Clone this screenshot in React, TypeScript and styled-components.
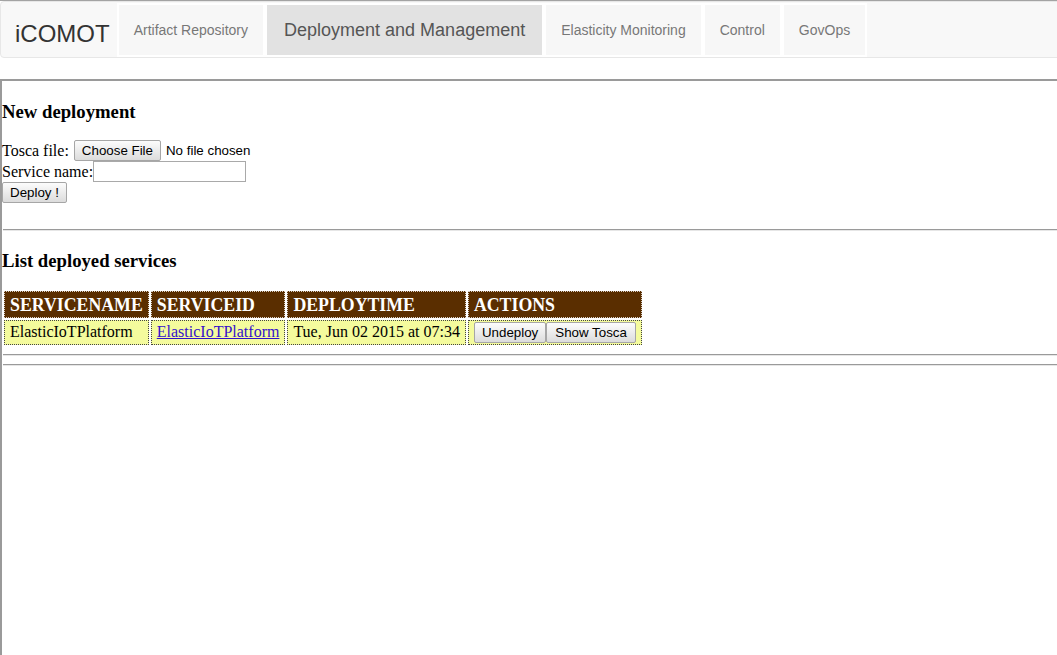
import styled, { createGlobalStyle } from 'styled-components'

const GlobalStyle = createGlobalStyle`
  html, body {
    margin: 0;
    padding: 0;
    background: #fff;
    overflow: hidden;
  }
  body {
    font-family: 'Liberation Serif', 'Times New Roman', serif;
    font-size: 16px;
    color: #000;
  }
`

const Page = styled.div`
  border-top: 1px solid #a3a3a3;
  height: 654px;
`

const Navbar = styled.nav`
  display: flex;
  align-items: flex-start;
  height: 55px;
  margin: 0 -6px 21px 0;
  border: 1px solid #e7e7e7;
  border-radius: 4px;
  background: #f8f8f8;
  font-family: 'Liberation Sans', Arial, sans-serif;
`

const Brand = styled.a`
  display: block;
  padding: 20px 7px 0 14px;
  font-size: 24px;
  line-height: 24px;
  color: #333;
  text-decoration: none;
`

const NavList = styled.ul`
  display: flex;
  margin: 1px 0 0;
  padding: 0;
  list-style: none;
`

const NavLink = styled.a<{ $active?: boolean }>`
  display: block;
  padding: ${(p) => (p.$active ? '15px 17px 15px' : '15px 15px 15px')};
  border: 2px solid #fff;
  line-height: 20px;
  font-size: ${(p) => (p.$active ? '18px' : '14px')};
  color: ${(p) => (p.$active ? '#555' : '#777')};
  background: ${(p) => (p.$active ? '#e2e2e2' : '#f7f7f7')};
  text-decoration: none;
  white-space: nowrap;
`

const Panel = styled.div`
  height: 600px;
  padding-top: 1px;
  border-top: 2px solid #9a9a9a;
  border-left: 2px solid #9a9a9a;
`

const SectionTitle = styled.h3<{ $after?: number }>`
  margin: 18.72px 0 ${(p) => p.$after ?? 18.72}px;
  font-size: 18.72px;
  font-weight: bold;
  line-height: 21px;
`

const FormRow = styled.div`
  display: flex;
  align-items: center;
  height: 21px;
  white-space: nowrap;
`

const Label = styled.label<{ $gap?: boolean }>`
  margin-right: ${(p) => (p.$gap ? '4px' : '0')};
`

const controlFace = `
  box-sizing: border-box;
  height: 21px;
  padding: 0 7px;
  border: 1px solid #a6a6a6;
  border-radius: 2px;
  background: linear-gradient(#fcfcfc, #dcdcdc);
  font-family: 'Liberation Sans', Arial, sans-serif;
  font-size: 13.33px;
  color: #000;
`

const Button = styled.button<{ $wide?: boolean }>`
  ${controlFace}
  margin: 0;
  padding: ${(p) => (p.$wide ? '0 8px' : '0 7px')};
  vertical-align: middle;
`

const FileInput = styled.input`
  margin-left: 1px;
  font-family: 'Liberation Sans', Arial, sans-serif;
  font-size: 13.33px;
  color: #000;
  &::file-selector-button {
    ${controlFace}
    margin: 0 5px 0 0;
  }
`

const TextInput = styled.input`
  box-sizing: border-box;
  width: 153px;
  height: 21px;
  margin: 0;
  padding: 1px 2px;
  border: 1px solid #a9a9a9;
  font-family: 'Liberation Sans', Arial, sans-serif;
  font-size: 13.33px;
`

const Rule = styled.hr<{ $top: number }>`
  height: 0;
  margin: ${(p) => p.$top}px 0 0 1px;
  border: none;
  border-top: 1px solid #9a9a9a;
  border-bottom: 1px solid #e6e6e6;
`

const Table = styled.table`
  border-collapse: separate;
  border-spacing: 2px;
  margin: 0;
`

const Th = styled.th`
  padding: 3px 5px 1px;
  border: 1px dotted #d8d0c8;
  background: #5a2e00;
  color: #fff;
  font-size: 17.8px;
  font-weight: bold;
  text-align: left;
  white-space: nowrap;
`

const Td = styled.td`
  padding: 1px 5px;
  border: 1px dotted #444;
  background: #f4fb9d;
  white-space: nowrap;
`

const ServiceLink = styled.a`
  color: #3311cc;
  text-decoration: underline;
`

const tabs = [
  { label: 'Artifact Repository' },
  { label: 'Deployment and Management', active: true },
  { label: 'Elasticity Monitoring' },
  { label: 'Control' },
  { label: 'GovOps' },
]

export default function App() {
  return (
    <Page>
      <GlobalStyle />
      <Navbar>
        <Brand href="#">iCOMOT</Brand>
        <NavList>
          {tabs.map((t) => (
            <li key={t.label}>
              <NavLink href="#" $active={t.active}>
                {t.label}
              </NavLink>
            </li>
          ))}
        </NavList>
      </Navbar>
      <Panel>
        <SectionTitle>New deployment</SectionTitle>
        <form onSubmit={(e) => e.preventDefault()}>
          <FormRow>
            <Label $gap>Tosca file:</Label>
            <FileInput type="file" />
          </FormRow>
          <FormRow>
            <Label>Service name:</Label>
            <TextInput type="text" />
          </FormRow>
          <FormRow>
            <Button type="submit">Deploy !</Button>
          </FormRow>
        </form>
        <Rule $top={26} />
        <SectionTitle $after={17.72}>List deployed services</SectionTitle>
        <Table>
          <thead>
            <tr>
              <Th>SERVICENAME</Th>
              <Th>SERVICEID</Th>
              <Th>DEPLOYTIME</Th>
              <Th>ACTIONS</Th>
            </tr>
          </thead>
          <tbody>
            <tr>
              <Td>ElasticIoTPlatform</Td>
              <Td>
                <ServiceLink href="#">ElasticIoTPlatform</ServiceLink>
              </Td>
              <Td>Tue, Jun 02 2015 at 07:34</Td>
              <Td>
                <Button>Undeploy</Button>
                <Button $wide>Show Tosca</Button>
              </Td>
            </tr>
          </tbody>
        </Table>
        <Rule $top={7} />
        <Rule $top={8} />
      </Panel>
    </Page>
  )
}
